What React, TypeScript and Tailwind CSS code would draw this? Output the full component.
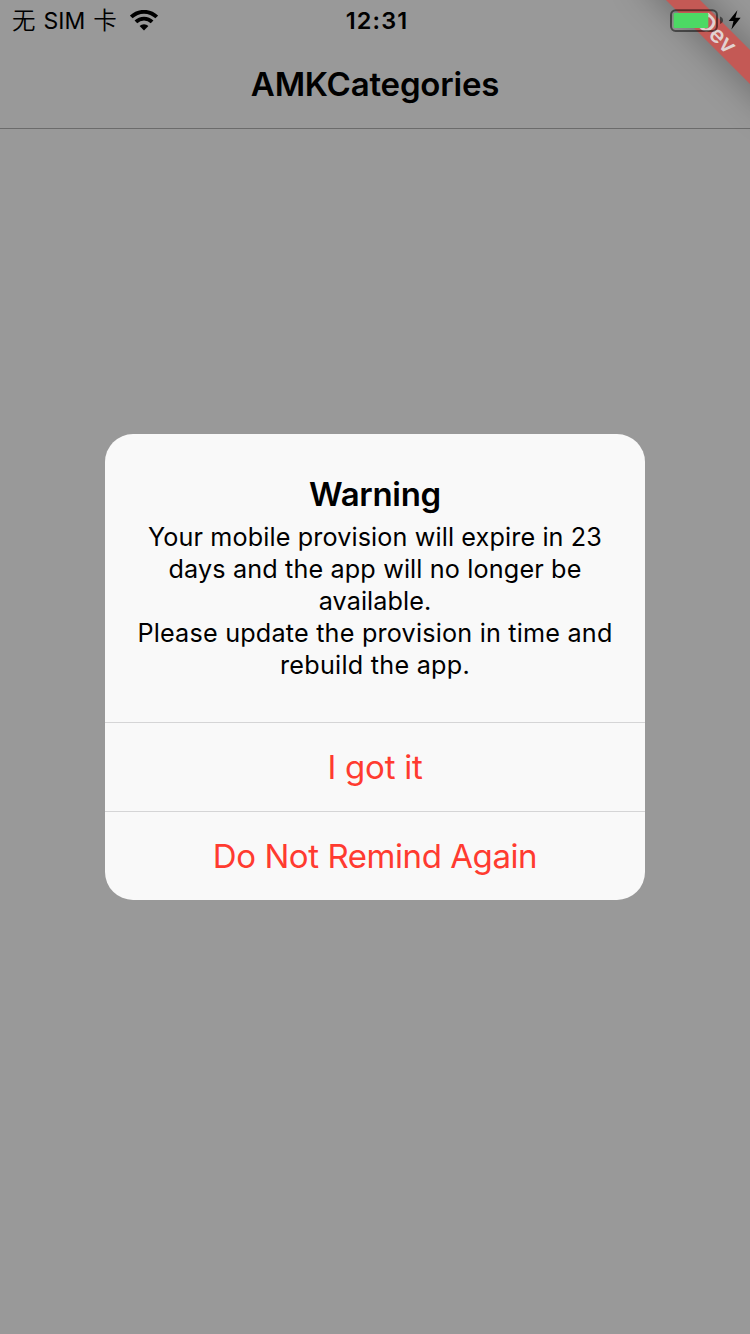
function WifiIcon() {
  return (
    <svg width="28" height="21" viewBox="0 0 28 21" className="block" fill="none">
      <path d="M1.3 7a18 18 0 0 1 25.4 0" stroke="#000" strokeWidth="3.8" />
      <path d="M5.9 11.9a11.5 11.5 0 0 1 16.2 0" stroke="#000" strokeWidth="3.8" />
      <path d="M9.6 16.1a6.3 6.3 0 0 1 8.8 0L14 20.5z" fill="#000" />
    </svg>
  );
}

function Battery() {
  return (
    <svg width="72" height="24" viewBox="0 0 72 24" className="block" fill="none">
      <rect x="1" y="2.3" width="46" height="20.6" rx="4.6" stroke="#000" strokeOpacity=".5" strokeWidth="2" />
      <rect x="3.7" y="5" width="34.6" height="15" rx="1.2" fill="#4cd964" />
      <path d="M50 8.5c2.2.8 3 2.2 3 3.8s-.8 3-3 3.8z" fill="#000" fillOpacity=".5" />
      <path d="M67.4 2.2 58.7 13h4.8l-2.1 8.6L70.6 9.8h-5.2z" fill="#000" />
    </svg>
  );
}

function Line({ children, tracking }: { children: string; tracking: string }) {
  return <span className={`block whitespace-nowrap ${tracking}`}>{children}</span>;
}

export default function App() {
  return (
    <div className="relative flex h-[1334px] w-[750px] flex-col overflow-hidden bg-[#999999] font-['Inter','Noto_Sans_CJK_SC',sans-serif] text-black">
      <header className="h-[129px] border-b border-[#6b6b6b]">
        <div className="grid h-[42px] grid-cols-3 items-center">
          <div className="flex items-center gap-[13px] pl-3">
            <div className="flex items-center gap-2 text-[23.5px] leading-10 whitespace-nowrap">
              <span className="font-[350]">无</span>
              <span className="text-[23px]">SIM</span>
              <span className="font-[350]">卡</span>
            </div>
            <div className="pb-[2px]">
              <WifiIcon />
            </div>
          </div>
          <span className="pl-1 text-center text-[23.5px] leading-[42px] font-semibold tracking-[1.1px]">12:31</span>
        </div>
        <h1 className="pt-[21px] text-center text-[33px] leading-[42px] font-semibold tracking-[-0.2px]">AMKCategories</h1>
      </header>

      <div className="absolute top-0 right-0 h-[180px] w-[180px] overflow-hidden">
        <div className="absolute top-[23.5px] left-[48.5px] flex h-6 w-[200px] rotate-45 items-center justify-center bg-[#c45955] pr-[6px] shadow-[0_0_36px_rgba(0,0,0,0.38)]">
          <span className="text-[23.5px] leading-6 font-semibold tracking-[0.3px] text-[#e2d2d1]">Dev</span>
        </div>
        <div className="absolute top-2 left-[100px]">
          <Battery />
        </div>
      </div>

      <main className="flex flex-1 flex-col items-center pt-[305px]">
        <section className="flex h-[466px] w-[540px] flex-col overflow-hidden rounded-[28px] bg-[#f9f9f9] text-center">
          <div className="flex h-[288px] flex-col items-center pt-[39px]">
            <h2 className="text-[33px] leading-[42px] font-semibold tracking-[-0.3px]">Warning</h2>
            <p className="pt-[6px] text-[25.2px] leading-8">
              <Line tracking="tracking-[0.12px]">Your mobile provision will expire in 23</Line>
              <Line tracking="tracking-[0.14px]">days and the app will no longer be</Line>
              <Line tracking="tracking-[0.08px]">available.</Line>
              <Line tracking="tracking-[0.2px]">Please update the provision in time and</Line>
              <Line tracking="tracking-[0.25px]">rebuild the app.</Line>
            </p>
          </div>
          <button className="h-[89px] border-t border-[#d5d5d6] text-[33px] leading-[88px] tracking-[-0.25px] text-[#ff3b30]">I got it</button>
          <button className="h-[89px] border-t border-[#d5d5d6] text-[33px] leading-[88px] tracking-[-0.43px] text-[#ff3b30]">Do Not Remind Again</button>
        </section>
      </main>
    </div>
  );
}
